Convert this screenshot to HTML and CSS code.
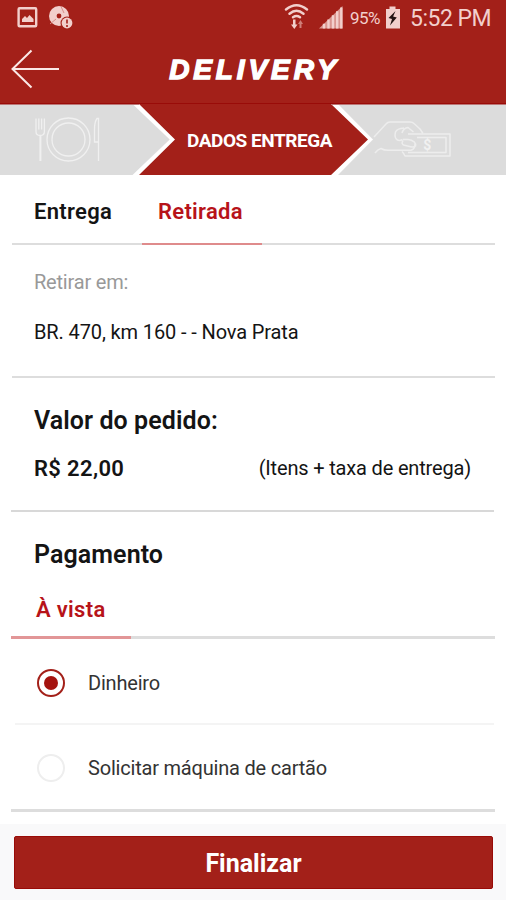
FILE: index.html
```html
<!DOCTYPE html>
<html lang="pt-BR">
<head>
<meta charset="utf-8">
<title>Delivery</title>
<link rel="stylesheet" href="styles.css">
</head>
<body>
<div class="screen">
  <div class="status">
    <svg class="status-left" width="60" height="36" viewBox="0 0 60 36">
      <rect x="1.600" y="8.300" width="17.600" height="18" rx="1" fill="none" stroke="#f2cfcc" stroke-width="2.400"/>
      <path d="M5 22v-3l3-3 2 2 2.500-3 4 4v3z" fill="#f2cfcc"/>
      <circle cx="42" cy="16" r="10" fill="#f2cfcc"/>
      <circle cx="42" cy="16" r="2.400" fill="#a32019"/>
      <path d="M44 6.500L47 13M33 24l6-5" stroke="#d78e89" stroke-width="1"/>
      <circle cx="50" cy="23" r="6.500" fill="#a32019"/>
      <circle cx="50" cy="23" r="5.400" fill="#f2cfcc"/>
      <path d="M50 19.500v4M50 25v2" stroke="#a32019" stroke-width="1.600"/>
    </svg>
    <svg class="status-wifi" width="60" height="36" viewBox="0 0 60 36">
      <g fill="none" stroke="#f2cfcc" stroke-width="2.400" stroke-linecap="round">
        <path d="M2 9.500Q12.500 1 23 9.500M5.500 13.700Q12.500 8 19.500 13.700M9 17.300Q12.500 14.800 16 17.300"/>
      </g>
      <path d="M9 19.500h2.500v5h2l-3.200 4.500-3.300-4.500h2z" fill="#f2cfcc"/>
      <path d="M15.500 28v-4h-1.500l2.500-4 2.500 4h-1.500v4z" fill="#cf7f79"/>
      <path d="M35 28.500L58.500 6v22.500z" fill="#d99590"/>
      <path d="M40 23.700v4.800M44.500 19.500v9M49 15.200v13.300M53.200 11.200v17.300M57.300 7.500v21" stroke="#f2cfcc" stroke-width="2.400"/>
    </svg>
    <span class="percent">95%</span>
    <svg class="battery" width="16" height="36" viewBox="0 0 16 36">
      <path d="M4.500 6.500h6V9H15v19.500H1V9h3.500z" fill="#f2cfcc"/>
      <path d="M10.500 11L3.500 18l3.500 1-2 6.500 6.800-8-3.700-1z" fill="#241413"/>
    </svg>
    <span class="clock">5:52 PM</span>
  </div>
  <header class="bar">
    <svg class="back" width="50" height="44" viewBox="0 0 50 44">
      <path d="M48 22H1.500M20.500 3.500L1.500 22l19 18.500" fill="none" stroke="#fbe9e7" stroke-width="2"/>
    </svg>
    <h1 class="title">DELIVERY</h1>
  </header>
  <div class="steps">
    <svg class="steps-art" width="506" height="71" viewBox="0 0 506 71">
      <rect width="506" height="71" fill="#a32019"/>
      <path d="M0 0H134L170 35.500 134 71H0z" fill="#dcdcdc"/>
      <path d="M132.500 0H139L175 35.500 139 71H132.500L169.500 35.500z" fill="#fff"/>
      <path d="M337 0H506V71H337L372 35.500z" fill="#dcdcdc"/>
      <path d="M331 0H338L373 35.500 338 71H331L368 35.500z" fill="#fff"/>
      <path d="M0 .5H139M331 .5H506" stroke="#b77" stroke-width="1"/>
      <g fill="none" stroke="#f0f0f0" stroke-width="1.300">
        <circle cx="68.500" cy="35.500" r="21.500"/>
        <circle cx="68.500" cy="35.500" r="16.500"/>
        <path d="M36 14.500v13q0 4 4.200 4t4.200-4v-13M38.800 14.500v11M41.600 14.500v11"/>
        <path d="M40.400 31.500v25.500" stroke-width="2"/>
        <path d="M98.500 57V14.500h-1.500q-2.500 3-2.500 11v12.500h4" />
      </g>
      <g fill="none" stroke="#ededed" stroke-width="1.500" stroke-linejoin="round">
        <path d="M374 33l12-13q1.500-2 4-2h20q2.500 0 4 1.500l6 5.500 3 4.500M375 49q2.500-3.500 6-4.500 3 1.800 7 1.800h15"/>
        <path d="M404 24q-7 .5-8.500 4-1.500 6 2 8 2.500 1 5-.5M402 29q1.500-5 6-5.500l5.500 4.500M403 36.500q-2 3 .5 4.500l5 1.200q4 1.500 7 0 1-2-1-4-3-2.500-6.500-2.700h-5M415 39q.5 6-4 7.300h-8"/>
        <path d="M408 30h42v22h-45q-1-2.500-3-4.500M417 33.500h29v15h-38"/>
      </g>
      <text x="427.300" y="46" class="dollar">$</text>
    </svg>
    <span class="step-label">DADOS ENTREGA</span>
  </div>
  <main>
    <nav class="tabs">
      <span class="tab">Entrega</span>
      <span class="tab active">Retirada</span>
    </nav>
    <section class="pickup">
      <p class="hint">Retirar em:</p>
      <p class="address">BR. 470, km 160 - - Nova Prata</p>
    </section>
    <section class="order">
      <h2 class="order-title">Valor do pedido:</h2>
      <div class="order-row"><strong class="price">R$ 22,00</strong><span class="note">(Itens + taxa de entrega)</span></div>
    </section>
    <section class="payment">
      <h2 class="payment-title">Pagamento</h2>
      <div class="pay-tabs"><span class="pay-tab">À vista</span></div>
      <label class="option first"><i class="radio on"></i><span class="cash">Dinheiro</span></label>
      <label class="option"><i class="radio"></i><span class="card">Solicitar máquina de cartão</span></label>
    </section>
  </main>
  <footer class="footer"><button class="submit">Finalizar</button></footer>
</div>
</body>
</html>
```
FILE: styles.css
```css
* { box-sizing: border-box; }
body { margin: 0; background: #fff; font-family: Roboto, "Liberation Sans", sans-serif; color: #141414; }
h1, h2, p { margin: 0; }
.screen { width: 506px; height: 900px; display: flex; flex-direction: column; overflow: hidden; }
svg { display: block; flex: none; }

.status { height: 36px; display: flex; background: #a32019; color: #f2cfcc; white-space: nowrap; padding-left: 17px; }
.status-wifi { margin-left: 207px; }
.percent { width: 35px; margin-left: 6px; font-size: 17px; line-height: 37px; letter-spacing: -0.5px; }
.battery { margin-left: 0; }
.clock { margin-left: 9px; font-size: 23px; line-height: 37px; letter-spacing: -0.5px; }

.bar { height: 68px; background: #a32019; display: grid; grid-template-columns: 61px 1fr 61px; align-items: center; border-bottom: 1px solid #990b08; }
.back { margin: -1px 0 0 11px; }
.title { text-align: center; font: italic 700 28px/34px "Liberation Sans", sans-serif; letter-spacing: 3.900px; padding-left: 3px; color: #fff; -webkit-text-stroke: 1.400px #fff; }

.steps { height: 71px; display: grid; }
.steps-art, .step-label { grid-area: 1 / 1; }
.step-label { padding-left: 187px; font-size: 19px; font-weight: 700; line-height: 73px; color: #fff; letter-spacing: -0.45px; white-space: nowrap; }
.dollar { font: bold 14px Roboto, sans-serif; fill: #f1f1f1; text-anchor: middle; }

main { flex: none; height: 649px; }
.tabs { height: 70px; margin: 0 11px 0 12px; border-bottom: 2px solid #ddd; display: flex; font-size: 22px; line-height: 74px; font-weight: 600; }
.tab { height: 70px; width: 130px; padding-left: 22px; letter-spacing: 0.3px; }
.tab.active { width: 120px; padding-left: 16px; color: #b71319; border-bottom: 2px solid #df8b8c; }
.pickup { height: 133px; margin: 0 11px 0 12px; padding: 23px 22px 0; border-bottom: 2px solid #ddd; white-space: nowrap; }
.hint { color: #999; font-size: 20px; line-height: 28px; letter-spacing: -0.2px; }
.address { margin-top: 22px; font-size: 20px; line-height: 28px; letter-spacing: -0.12px; }
.order { height: 134px; margin: 0 12px 0 11px; padding: 26px 23px 0; border-bottom: 2px solid #d8d8d8; }
.order-title, .payment-title { font-size: 25px; line-height: 34px; font-weight: 600; letter-spacing: 0.08px; }
.order-row { display: flex; justify-content: space-between; margin-top: 15px; font-size: 22px; line-height: 31px; white-space: nowrap; }
.price { font-weight: 600; letter-spacing: 0.35px; }
.note { font-size: 20px; letter-spacing: -0.17px; }
.payment { height: 300px; margin: 0 11px 0 11px; border-bottom: 3px solid #ddd; }
.payment-title { padding: 26px 23px 0; }
.pay-tabs { height: 67px; border-bottom: 3px solid #ddd; display: flex; }
.pay-tab { width: 120px; height: 67px; padding-left: 25px; line-height: 76px; font-size: 22px; font-weight: 600; letter-spacing: 0.3px; color: #b71319; border-bottom: 3px solid #e29697; }
.option { height: 85px; display: flex; align-items: center; margin: 0 1px 0 4px; padding: 0 0 0 22px; font-size: 20px; color: #333; white-space: nowrap; letter-spacing: -0.2px; }
.option.first { height: 86px; padding-top: 3px; border-bottom: 2px solid #f4f4f4; }
.option span { padding-top: 1px; }
.radio { width: 28px; height: 28px; margin-right: 23px; border: 2px solid #eee; border-radius: 50%; display: grid; place-items: center; }
.radio.on { border: 2.500px solid #a32019; }
.radio.on::after { content: ""; width: 14px; height: 14px; border-radius: 50%; background: #a5130f; }

.footer { height: 76px; background: #f9f9fa; padding: 12px 13px 0 14px; }
.submit { display: block; width: 479px; height: 53px; border: 1px solid #990b08; border-radius: 2px; background: #a32019; color: #fff; font: 700 25px Roboto, sans-serif; padding: 2px 0 0; }
```
